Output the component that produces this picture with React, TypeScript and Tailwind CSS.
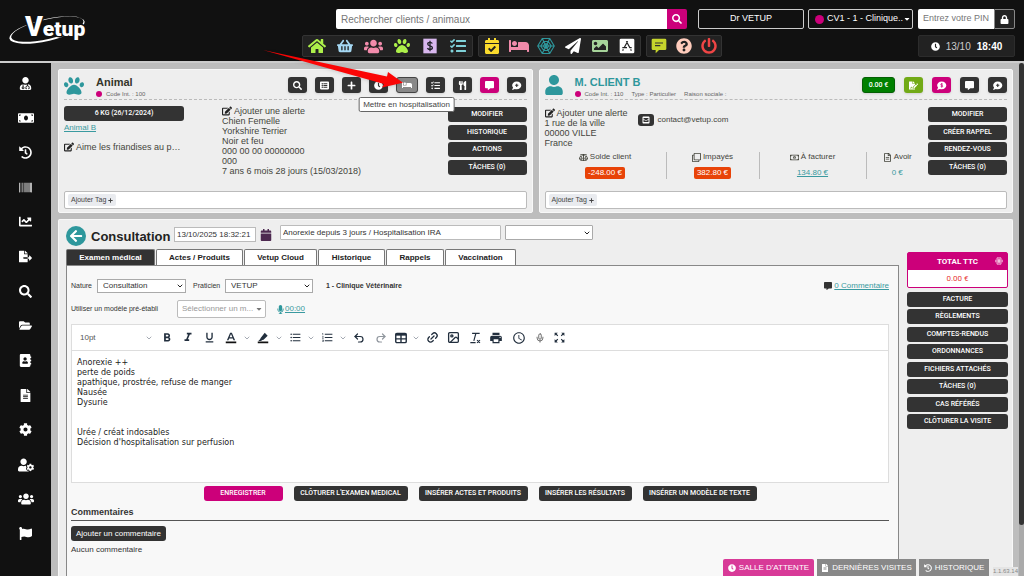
import type { ReactNode } from 'react';
import type { IconType } from 'react-icons';
import {
  FaAddressBook, FaArrowLeft, FaBalanceScale, FaBarcode, FaBed, FaCalendar, FaCalendarCheck, FaChartLine,
  FaClock, FaCog, FaCommentAlt, FaEdit, FaEnvelopeSquare, FaFileAlt, FaFileExport, FaFileSignature, FaFlag,
  FaFolderOpen, FaHistory, FaHome, FaImage, FaListAlt, FaLock, FaMicrophone, FaMoneyBill, FaPaperPlane, FaPaw,
  FaPlus, FaPowerOff, FaQuestionCircle, FaRegClone, FaRegFileAlt, FaRegMoneyBillAlt, FaSearch, FaShoppingBasket,
  FaTasks, FaUser, FaUserCog, FaUserMd, FaUsers, FaUtensils, FaCaretDown,
} from 'react-icons/fa';
import {
  MdAccessTime, MdFormatBold, MdFormatItalic, MdFormatUnderlined, MdFormatListBulleted, MdFormatListNumbered,
  MdPrint, MdZoomOutMap,
} from 'react-icons/md';
import { ChevronDown, Image as ImageIcon, Link2, Mic, Redo2, Undo2 } from 'lucide-react';

const sideIcons: [IconType, string][] = [
  [FaUserMd, 'Clients'], [FaMoneyBill, 'Caisse'], [FaHistory, 'Historique'], [FaBarcode, 'Stock'],
  [FaChartLine, 'Statistiques'], [FaFileExport, 'Exports'], [FaSearch, 'Recherche'], [FaFolderOpen, 'Dossiers'],
  [FaAddressBook, 'Contacts'], [FaFileAlt, 'Documents'], [FaCog, 'Paramètres'], [FaUserCog, 'Utilisateur'],
  [FaUsers, 'Groupes'], [FaFlag, 'Signalements'],
];

function Web({ className = '' }: { className?: string }) {
  return (
    <svg viewBox="0 0 24 24" className={className} fill="none" stroke="currentColor" strokeWidth="1.5">
      <path d="M7 2h10l6 10-6 10H7L1 12z M9 6h6l4 6-4 6H9l-4-6z M10.5 9h3l2 3-2 3h-3l-2-3z M7 2l10 20M17 2L7 22M1 12h22" />
    </svg>
  );
}

function Dollar({ className = '' }: { className?: string }) {
  return (
    <svg viewBox="0 0 24 24" className={className}>
      <rect x="2" y="1" width="20" height="22" fill="#d9b8ef" />
      <path d="M15.500 8.200c-.6-1.200-1.900-1.700-3.500-1.700-2 0-3.400.9-3.400 2.500 0 3.800 7 1.800 7 5.600 0 1.700-1.600 2.700-3.600 2.700-1.900 0-3.300-.8-3.800-2.200M12 4.300v15.400" fill="none" stroke="#22222a" strokeWidth="2" />
    </svg>
  );
}

function AppBox({ className = '' }: { className?: string }) {
  return (
    <svg viewBox="0 0 24 24" className={className}>
      <rect x="1" y="1" width="22" height="22" rx="2" fill="#fff" />
      <path d="M13 5L7.500 15M11 5l5.500 10M5 14.500h7M15.500 14.500H19M6.500 17l-1 2M17.500 17l1 2" fill="none" stroke="#222" strokeWidth="1.800" />
    </svg>
  );
}

function Bubble({ className = '', mark }: { className?: string; mark: 'plus' | 'dollar' }) {
  return (
    <svg viewBox="0 0 24 24" className={className}>
      <path d="M12.500 3C6.500 3 2.500 6.800 2.500 11.500c0 2 .8 3.900 2.100 5.300L2 21.500c3 0 5-.8 6.300-1.900 1.300.4 2.700.6 4.200.6 6 0 10-4 10-8.700S18.500 3 12.500 3z" fill="currentColor" />
      {mark === 'plus'
        ? <path d="M12.500 8v7M9 11.500h7" stroke="#333" strokeWidth="2.400" />
        : <path d="M14.800 9.300c-1.400-1.400-4.500-1-4.500.7 0 2.200 4.600 1 4.600 3.300 0 1.700-3.200 2-4.800.5M12.500 6.500v10" fill="none" stroke="#cc007a" strokeWidth="1.600" />}
    </svg>
  );
}

function Logo() {
  return (
    <svg viewBox="0 0 90 40" className="h-10 w-[90px]" role="img" aria-label="Vetup">
      <path
        fillRule="evenodd"
        transform="rotate(-13 47 21)"
        d="M8.500 21a38.500 11 0 1 0 77 0a38.500 11 0 1 0 -77 0z M10.500 20.300a37 9.800 0 1 1 74 0a37 9.800 0 1 1 -74 0z"
        fill="#fff"
      />
      <text x="25" y="27" fontSize="21" fontWeight="900" fill="#fff" stroke="#111" strokeWidth="3" paintOrder="stroke" fontFamily="Roboto,sans-serif">
        <tspan fontSize="27">V</tspan>etup
      </text>
    </svg>
  );
}

function DarkButton({ children, className = 'bg-[#333]' }: { children: ReactNode; className?: string }) {
  return (
    <button className={`h-[15px] rounded-[3px] text-center font-[Roboto,sans-serif] text-[7px] font-medium leading-[15px] whitespace-nowrap text-white ${className}`}>
      {children}
    </button>
  );
}

function IconButton({ label, children, className = 'w-[19px] bg-[#333]' }: { label: string; children: ReactNode; className?: string }) {
  return (
    <button aria-label={label} className={`flex h-4 items-center justify-center rounded-[3px] text-[9px] text-white shadow-sm ${className}`}>
      {children}
    </button>
  );
}

function TagBox() {
  return (
    <div className="flex h-[18px] items-center rounded-[2px] border border-[#bbb] bg-white px-[3px]">
      <button className="flex h-3 items-center gap-[2px] rounded-[2px] bg-[#e9ebef] px-[3px] text-[7px] text-[#444]">
        Ajouter Tag <FaPlus className="size-[5px]" />
      </button>
    </div>
  );
}

function NavGroup({ children, className }: { children: ReactNode; className: string }) {
  return (
    <nav className={`flex h-[22px] items-center justify-around rounded-[2px] border border-[#333] bg-[#222] text-base ${className}`}>
      {children}
    </nav>
  );
}

function NavButton({ label, className = '', children }: { label: string; className?: string; children: ReactNode }) {
  return <button aria-label={label} className={`flex w-5 justify-center ${className}`}>{children}</button>;
}

function SelectBox({ id, label, options, className = '' }: { id: string; label: string; options: string[]; className?: string }) {
  return (
    <span className={`relative flex items-center border border-[#aaa] bg-white ${className}`}>
      <select id={id} aria-label={label} className="h-full w-full appearance-none bg-transparent pr-3 pl-[5px] outline-none">
        {options.map((o) => <option key={o}>{o}</option>)}
      </select>
      <ChevronDown className="pointer-events-none absolute right-[1px] size-2 text-[#222]" strokeWidth={3} />
    </span>
  );
}

function AnimalPanel() {
  return (
    <section className="flex flex-col rounded-[2px] border border-[#f8f8f8] bg-[#eee] px-[5px] pt-2 pb-[3px]">
      <header className="flex h-[22px] items-start border-b border-dashed border-[#bbb]">
        <FaPaw className="mt-[-2px] size-5 text-[#2e979c]" />
        <div className="ml-3 grow">
          <h2 className="mt-[-3px] text-[11px] leading-[14px] font-bold text-[#34352a]">Animal</h2>
          <p className="flex items-center gap-1 text-[6px] leading-[10px] text-[#666]"><i className="size-[6px] rounded-full bg-[#cc007a]" />Code Int. : 100</p>
        </div>
        <div className="mt-[-1px] flex gap-2 pr-[1px]">
          <IconButton label="Rechercher"><FaSearch /></IconButton>
          <IconButton label="Fiche"><FaListAlt /></IconButton>
          <IconButton label="Ajouter"><FaPlus /></IconButton>
          <IconButton label="Horaires"><FaClock /></IconButton>
          <div className="relative">
            <IconButton label="Mettre en hospitalisation" className="w-[22px] border border-[#444] bg-[#888]"><FaBed className="size-[10px]" /></IconButton>
            <span role="tooltip" className="absolute top-5 left-1/2 z-20 -translate-x-1/2 rounded-[2px] border border-[#666] bg-white px-1 text-[8px] leading-[13px] whitespace-nowrap text-[#444]">Mettre en hospitalisation</span>
          </div>
          <IconButton label="Tâches"><FaTasks /></IconButton>
          <IconButton label="Alimentation"><FaUtensils /></IconButton>
          <IconButton label="Message" className="w-[19px] bg-[#cc007a]"><FaCommentAlt /></IconButton>
          <IconButton label="Nouveau message"><Bubble mark="plus" className="size-[11px]" /></IconButton>
        </div>
      </header>
      <div className="flex grow pt-[6px] text-[9px] leading-[10px] text-[#44453c]">
        <div className="w-[158px]">
          <DarkButton className="w-[120px] bg-[#333]">6 KG (26/12/2024)</DarkButton>
          <a href="#animal" className="mt-[2px] block text-[8px] text-[#3a9aa0] underline">Animal B</a>
          <p className="mt-[9px] flex items-center gap-[2px]"><FaEdit className="size-[10px] text-[#222]" />Aime les friandises au p…</p>
        </div>
        <div className="grow">
          <p className="flex items-center gap-[2px]"><FaEdit className="size-[10px] text-[#222]" />Ajouter une alerte</p>
          <p>Chien Femelle</p>
          <p>Yorkshire Terrier</p>
          <p>Noir et feu</p>
          <p>000 00 00 00000000</p>
          <p>000</p>
          <p>7 ans 6 mois 28 jours (15/03/2018)</p>
        </div>
        <div className="mt-[1px] flex h-[68px] w-[79px] flex-col justify-between">
          <DarkButton>MODIFIER</DarkButton>
          <DarkButton>HISTORIQUE</DarkButton>
          <DarkButton>ACTIONS</DarkButton>
          <DarkButton>TÂCHES (0)</DarkButton>
        </div>
      </div>
      <TagBox />
    </section>
  );
}

function Balance({ icon: Icon, label, children, className }: { icon: IconType; label: string; children: ReactNode; className: string }) {
  return (
    <div className={`flex h-[27px] flex-col items-center justify-between ${className}`}>
      <span className="flex items-center gap-[2px] whitespace-nowrap"><Icon className="size-[9px]" />{label}</span>
      {children}
    </div>
  );
}

function ClientPanel() {
  return (
    <section className="flex flex-col rounded-[2px] border border-[#f8f8f8] bg-[#eee] px-[5px] pt-2 pb-[3px]">
      <header className="flex h-[22px] items-start border-b border-dashed border-[#bbb]">
        <FaUser className="mt-[-3px] h-5 w-[18px] text-[#2e979c]" />
        <div className="ml-3 grow">
          <h2 className="mt-[-3px] text-[11px] leading-[14px] font-bold text-[#2e979c]">M. CLIENT B</h2>
          <p className="flex items-center gap-2 text-[6px] leading-[10px] text-[#666]">
            <span className="flex items-center gap-1"><i className="size-[6px] rounded-full bg-[#cc007a]" />Code Int. : 110</span>
            <span>Type : Particulier</span>
            <span>Raison sociale :</span>
          </p>
        </div>
        <div className="mt-[-1px] flex gap-[9px]">
          <IconButton label="Solde 0.00 €" className="w-[33px] border border-[#056005] bg-[#008000]"><span className="font-[Roboto,sans-serif] text-[7px] font-medium">0.00 €</span></IconButton>
          <IconButton label="Signature" className="w-[19px] bg-[#72aa16]"><FaFileSignature /></IconButton>
          <IconButton label="Message payant" className="w-[19px] bg-[#cc007a]"><Bubble mark="dollar" className="size-[11px]" /></IconButton>
          <IconButton label="Message"><FaCommentAlt /></IconButton>
          <IconButton label="Nouveau message"><Bubble mark="plus" className="size-[11px]" /></IconButton>
        </div>
      </header>
      <div className="flex grow pt-[6px] text-[9px] leading-[10px] text-[#44453c]">
        <div className="flex grow flex-col">
          <div className="mt-[2px] flex">
            <div className="w-[93px]">
              <p className="flex items-center gap-[2px]"><FaEdit className="size-[10px] text-[#222]" />Ajouter une alerte</p>
              <p>1 rue de la ville</p>
              <p>00000 VILLE</p>
              <p>France</p>
            </div>
            <div className="mt-[6px] flex h-3 items-center gap-1 text-[8px]">
              <button aria-label="Envoyer un e-mail" className="flex h-3 w-4 items-center justify-center rounded-[3px] bg-[#333] text-white"><FaEnvelopeSquare className="size-2" /></button>
              contact@vetup.com
            </div>
          </div>
          <div className="flex pt-[4px] text-[8px] leading-[10px]">
            <Balance icon={FaBalanceScale} label="Solde client" className="w-[122px] border-r border-[#bbb]">
              <span className="rounded-[2px] bg-[#e84308] px-[3px] leading-[12px] text-white">-248.00 €</span>
            </Balance>
            <Balance icon={FaRegClone} label="Impayés" className="w-[93px] border-r border-[#bbb]">
              <span className="rounded-[2px] bg-[#e84308] px-[3px] leading-[12px] text-white">382.80 €</span>
            </Balance>
            <Balance icon={FaRegMoneyBillAlt} label="À facturer" className="w-[107px] border-r border-[#bbb]">
              <a href="#facturer" className="leading-[12px] text-[#3a9aa0] underline">134.80 €</a>
            </Balance>
            <Balance icon={FaRegFileAlt} label="Avoir" className="grow">
              <span className="leading-[12px] text-[#3a9aa0]">0 €</span>
            </Balance>
          </div>
        </div>
        <div className="mt-[1px] flex h-[68px] w-[79px] flex-col justify-between">
          <DarkButton>MODIFIER</DarkButton>
          <DarkButton>CRÉER RAPPEL</DarkButton>
          <DarkButton>RENDEZ-VOUS</DarkButton>
          <DarkButton>TÂCHES (0)</DarkButton>
        </div>
      </div>
      <TagBox />
    </section>
  );
}

function Tool({ label, menu, className = '', children }: { label: string; menu?: boolean; className?: string; children: ReactNode }) {
  return (
    <button aria-label={label} className={`flex shrink-0 items-center justify-between ${className}`}>
      <span className="flex w-[14px] justify-center">{children}</span>
      {menu && <ChevronDown className="size-2 text-[#777f8c]" />}
    </button>
  );
}

function Editor() {
  return (
    <div className="mt-[6px] border border-[#ddd] bg-white text-[#222f3e]">
      <div className="flex h-[26px] items-center border-b border-[#ddd] text-[13px]">
        <button className="ml-2 flex w-[73px] items-center justify-between text-[8px] text-[#555]"><span>10pt</span><ChevronDown className="size-2 text-[#777f8c]" /></button>
        <Tool label="Gras" className="ml-[7px]"><MdFormatBold className="size-4" /></Tool>
        <Tool label="Italique" className="ml-[7px]"><MdFormatItalic className="size-[15px]" /></Tool>
        <Tool label="Souligné" className="ml-[7px]"><MdFormatUnderlined /></Tool>
        <Tool label="Couleur du texte" menu className="ml-2 w-[27px]">
          <svg viewBox="0 0 24 24" className="size-[14px]"><path d="M3 18h18v3H3z" fill="#111" /><path d="M10.500 3h3L19 16h-2.700l-1.100-3H8.800l-1.100 3H5zM9.600 10.800h4.800L12 5z" fill="currentColor" /></svg>
        </Tool>
        <Tool label="Surlignage" menu className="ml-[5px] w-[27px]">
          <svg viewBox="0 0 24 24" className="size-[14px]"><path d="M3 18h18v3H3z" fill="#111" /><path d="M8 12l7-9 5 5-7 7-2 .5-2.500 1.500H4l3-3z" fill="currentColor" /></svg>
        </Tool>
        <Tool label="Liste à puces" menu className="ml-[5px] w-[27px]"><MdFormatListBulleted /></Tool>
        <Tool label="Liste numérotée" menu className="ml-[5px] w-[27px]"><MdFormatListNumbered /></Tool>
        <Tool label="Annuler" className="ml-[5px]"><Undo2 className="size-3" strokeWidth={2.4} /></Tool>
        <Tool label="Rétablir" className="ml-2 opacity-50"><Redo2 className="size-3" strokeWidth={2.4} /></Tool>
        <Tool label="Tableau" menu className="ml-[6px] w-[26px]">
          <svg viewBox="0 0 24 24" className="size-[14px]" fill="none" stroke="currentColor" strokeWidth="2.400"><rect x="3" y="4" width="18" height="16" rx="2" /><path d="M3 6h18" strokeWidth="4" /><path d="M3 13.500h18M12 6v14" /></svg>
        </Tool>
        <Tool label="Lien" className="ml-[5px]"><Link2 className="size-[13px] -rotate-45" strokeWidth={2.4} /></Tool>
        <Tool label="Image" className="ml-[7px]"><ImageIcon className="size-[13px]" strokeWidth={2.4} /></Tool>
        <Tool label="Effacer la mise en forme" className="ml-2">
          <svg viewBox="0 0 24 24" className="size-[14px]" fill="none" stroke="currentColor" strokeWidth="2"><path d="M7 4h13M13.500 4L10 17M4 20h9M15.500 15.500l5 5M20.500 15.500l-5 5" /></svg>
        </Tool>
        <Tool label="Imprimer" className="ml-[7px]"><MdPrint className="size-[14px]" /></Tool>
        <Tool label="Horodatage" className="ml-[9px]"><MdAccessTime className="size-[14px]" /></Tool>
        <Tool label="Dictée" className="ml-[7px]"><Mic className="size-[10px] text-[#555]" /></Tool>
        <Tool label="Plein écran" className="ml-[5px]"><MdZoomOutMap className="size-[13px]" /></Tool>
      </div>
      <textarea
        aria-label="Compte rendu de l’examen"
        className="block h-[131px] w-full resize-none px-[5px] pt-[7px] font-['DejaVu_Sans',sans-serif] text-[8px] leading-[10px] text-[#222] outline-none"
        defaultValue={"Anorexie ++\nperte de poids\napathique, prostrée, refuse de manger\nNausée\nDysurie\n\n\nUrée / créat indosables\nDécision d'hospitalisation sur perfusion"}
      />
    </div>
  );
}

const tabs: [string, string][] = [
  ['Examen médical', 'w-[89px]'], ['Actes / Produits', 'w-[87px]'], ['Vetup Cloud', 'w-[73px]'],
  ['Historique', 'w-[67px]'], ['Rappels', 'w-[58px]'], ['Vaccination', 'w-[71px]'],
];

function ConsultationPanel() {
  return (
    <section className="mt-[6px] flex grow gap-2 rounded-t-[2px] border border-b-0 border-[#f8f8f8] bg-[#eee] pt-[5px] pr-1 pl-[7px] text-[8px] text-[#333]">
      <div className="flex min-w-0 grow flex-col">
        <div className="flex items-start">
          <button aria-label="Retour" className="mt-[1px] flex size-5 items-center justify-center rounded-full bg-[#2e979c] text-white"><FaArrowLeft className="size-[14px]" /></button>
          <h1 className="mt-1 ml-[5px] w-[83px] text-[13px] leading-[16px] font-bold text-[#222]">Consultation</h1>
          <input aria-label="Date" defaultValue="13/10/2025 18:32:21" className="mt-[2px] h-[15px] w-[82px] border border-[#bbb] bg-white px-[2px] text-[8px]" />
          <FaCalendar className="mt-1 ml-1 size-3 text-[#4d2850]" />
          <input aria-label="Motif" defaultValue="Anorexie depuis 3 jours / Hospitalisation IRA" className="ml-2 h-[15px] w-[221px] rounded-[1px] border border-[#bbb] bg-white px-[2px] text-[8px]" />
          <SelectBox id="statut" label="Statut" options={['']} className="ml-1 h-[15px] w-[88px] rounded-[1px]" />
        </div>
        <div role="tablist" className="mt-[3px] flex gap-[1px]">
          {tabs.map(([name, width], i) => (
            <button key={name} role="tab" aria-selected={i === 0} className={`h-4 rounded-t-[2px] border border-b-0 border-[#777] text-[8px] font-bold ${width} ${i === 0 ? 'bg-[#333] text-white' : 'bg-white text-[#222]'}`}>{name}</button>
          ))}
        </div>
        <div className="grow border border-b-0 border-[#888] bg-[#f8f8f8] pt-[13px] pr-[9px] pl-1">
          <div className="flex h-[14px] items-center">
            <label htmlFor="nature" className="w-[26px] text-[7px]">Nature</label>
            <SelectBox id="nature" label="Nature" options={['Consultation']} className="h-[14px] w-[89px] text-[8px]" />
            <label htmlFor="praticien" className="ml-[7px] w-[32px] text-[7px]">Praticien</label>
            <SelectBox id="praticien" label="Praticien" options={['VETUP']} className="h-[14px] w-[88px] text-[8px]" />
            <b className="ml-[13px] grow text-[7px]">1 - Clinique Vétérinaire</b>
            <FaCommentAlt className="size-2" />
            <a href="#commentaires" className="ml-[2px] text-[#3a9aa0] underline">0 Commentaire</a>
          </div>
          <div className="mt-[7px] flex h-[18px] items-center">
            <label htmlFor="modele" className="w-[106px] text-[7px]">Utiliser un modèle pré-établi</label>
            <span className="relative flex h-[18px] w-[89px] items-center rounded-[2px] border border-[#bbb] bg-white">
              <select id="modele" className="h-full w-full appearance-none bg-transparent px-1 text-[8px] text-[#999] outline-none"><option>Sélectionner un m...</option></select>
              <FaCaretDown className="pointer-events-none absolute right-[2px] size-2 text-[#777]" />
            </span>
            <FaMicrophone className="ml-[10px] size-[9px] text-[#2e979c]" />
            <a href="#dictee" className="text-[#3a9aa0] underline">00:00</a>
          </div>
          <Editor />
          <div className="mt-[3px] flex justify-center gap-[11px]">
            <DarkButton className="w-[79px] bg-[#cc007a]">ENREGISTRER</DarkButton>
            <DarkButton className="w-[114px] bg-[#333]">CLÔTURER L'EXAMEN MEDICAL</DarkButton>
            <DarkButton className="w-[109px] bg-[#333]">INSÉRER ACTES ET PRODUITS</DarkButton>
            <DarkButton className="w-[93px] bg-[#333]">INSÉRER LES RÉSULTATS</DarkButton>
            <DarkButton className="w-[114px] bg-[#333]">INSÉRER UN MODÈLE DE TEXTE</DarkButton>
          </div>
          <h3 className="mt-[5px] border-b border-[#555] pb-[2px] text-[9px] leading-[12px] font-bold">Commentaires</h3>
          <button className="mt-[5px] block h-[15px] rounded-[3px] bg-[#333] px-[5px] text-[8px] leading-[15px] text-white">Ajouter un commentaire</button>
          <p className="mt-1 text-[8px] leading-[10px]">Aucun commentaire</p>
        </div>
      </div>
      <aside className="mt-[27px] flex w-[101px] shrink-0 flex-col">
        <div className="rounded-[2px] border border-[#cc007a] bg-white text-center font-[Roboto,sans-serif]">
          <div className="relative bg-[#cc007a] text-[8px] leading-[17px] font-bold text-white">TOTAL TTC<Web className="absolute top-1 right-1 size-2" /></div>
          <div className="text-[8px] leading-[17px] text-[#e8403a]">0.00 €</div>
        </div>
        <div className="mt-1 flex h-[137px] flex-col justify-between">
          {['FACTURE', 'RÈGLEMENTS', 'COMPTES-RENDUS', 'ORDONNANCES', 'FICHIERS ATTACHÉS', 'TÂCHES (0)', 'CAS RÉFÉRÉS', 'CLÔTURER LA VISITE'].map((t) => (
            <DarkButton key={t}>{t}</DarkButton>
          ))}
        </div>
      </aside>
    </section>
  );
}

export default function App() {
  return (
    <div className="relative flex h-screen flex-col overflow-hidden bg-[#bdbdbd] font-['Liberation_Sans',Arial,sans-serif]">
      <header className="flex h-[63px] shrink-0 border-b-2 border-[#ccc] bg-[#111] pt-[9px] pr-[9px]">
        <div className="w-[302px] shrink-0"><Logo /></div>
        <div className="flex grow flex-col gap-[6px] text-[10px] text-white">
          <div className="flex h-5 pl-[34px]">
            <input aria-label="Rechercher" placeholder="Rechercher clients / animaux" className="min-w-0 grow rounded-l-[2px] bg-white px-[5px] text-[10px] placeholder:text-[#777]" />
            <button aria-label="Rechercher" className="flex w-5 items-center justify-center rounded-r-[2px] bg-[#cc007a]"><FaSearch /></button>
            <button className="ml-[11px] w-[106px] rounded-[2px] border border-[#ccc] text-[9px]">Dr VETUP</button>
            <button className="ml-1 flex w-[105px] items-center rounded-[2px] border border-[#ccc] pl-[6px] text-[9px] whitespace-nowrap"><i className="mr-[3px] size-[9px] rounded-full bg-[#cc007a]" />CV1 - 1 - Clinique..<FaCaretDown className="size-2" /></button>
            <input aria-label="Code PIN" placeholder="Entrez votre PIN" className="ml-[5px] w-[76px] rounded-l-[2px] bg-white px-[5px] text-[9px] placeholder:text-[#777]" />
            <button aria-label="Verrouiller" className="flex w-[21px] items-center justify-center rounded-r-[2px] border border-[#888] bg-[#222]"><FaLock className="size-[9px]" /></button>
          </div>
          <div className="flex gap-[5px]">
            <NavGroup className="w-[171px]">
              <NavButton label="Accueil" className="text-[#adf04a]"><FaHome className="size-[18px]" /></NavButton>
              <NavButton label="Ventes" className="text-[#a5d8f3]"><FaShoppingBasket /></NavButton>
              <NavButton label="Clients" className="text-[#f28bab]"><FaUsers className="size-[19px]" /></NavButton>
              <NavButton label="Animaux" className="text-[#adf04a]"><FaPaw /></NavButton>
              <NavButton label="Caisse"><Dollar className="size-4" /></NavButton>
              <NavButton label="Tâches" className="text-[#7fd1d8]"><FaTasks /></NavButton>
            </NavGroup>
            <NavGroup className="w-[163px]">
              <NavButton label="Agenda" className="text-[#fadb2d]"><FaCalendarCheck /></NavButton>
              <NavButton label="Hospitalisation" className="text-[#f28bab]"><FaBed className="size-5" /></NavButton>
              <NavButton label="Réseau" className="text-[#2e979c]"><Web className="size-[18px]" /></NavButton>
              <NavButton label="Envois"><FaPaperPlane /></NavButton>
              <NavButton label="Images" className="text-[#a6d49a]"><FaImage /></NavButton>
              <NavButton label="Applications"><AppBox className="size-4" /></NavButton>
            </NavGroup>
            <NavGroup className="w-[76px]">
              <NavButton label="Messages" className="text-[#c6d52c]">
                <svg viewBox="0 0 24 24" className="size-4"><path d="M3 1h18a2 2 0 0 1 2 2v13a2 2 0 0 1-2 2h-9l-5 5v-5H3a2 2 0 0 1-2-2V3a2 2 0 0 1 2-2z" fill="currentColor" /><path d="M6 7.500h12M6 11.500h8" stroke="#333" strokeWidth="1.800" /></svg>
              </NavButton>
              <NavButton label="Aide" className="text-[#ffccbc]"><FaQuestionCircle /></NavButton>
              <NavButton label="Déconnexion" className="text-[#ef4545]"><FaPowerOff /></NavButton>
            </NavGroup>
            <div className="ml-auto flex h-[22px] w-[97px] items-center justify-center gap-[6px] rounded-[2px] border border-[#2c2c2c] bg-[#222] text-[10px]">
              <FaClock className="size-[9px]" /><span className="text-[#ccc]">13/10</span><b>18:40</b>
            </div>
          </div>
        </div>
      </header>
      <div className="flex min-h-0 grow">
        <nav className="flex w-[51px] shrink-0 flex-col items-center justify-between bg-[#111] pt-[11px] pb-[33px] text-[13px] text-white">
          {sideIcons.map(([Icon, label]) => (
            <button key={label} aria-label={label} className="flex h-[18px] items-center">
              <Icon className={Icon === FaUserCog || Icon === FaUsers || Icon === FaMoneyBill ? 'size-4' : ''} />
            </button>
          ))}
        </nav>
        <main className="flex min-w-0 grow flex-col overflow-hidden pt-[6px] pr-[6px] pl-[7px]">
          <div className="grid h-[144px] shrink-0 grid-cols-2 gap-[6px]">
            <AnimalPanel />
            <ClientPanel />
          </div>
          <ConsultationPanel />
        </main>
        <div className="w-[5px] shrink-0 bg-[#aaa]"><div className="h-[90%] rounded-full bg-[#333]" /></div>
      </div>
      <footer className="absolute right-[6px] bottom-0 z-10 flex items-end gap-[3px] text-[8px] whitespace-nowrap text-white">
        <button className="flex h-[17px] w-[91px] items-center justify-center gap-[3px] rounded-t-[2px] bg-[#d83a98]"><FaClock className="size-2" />SALLE D'ATTENTE</button>
        <button className="flex h-[17px] w-[99px] items-center justify-center gap-[3px] bg-[#888]"><FaFileAlt className="size-2" />DERNIÈRES VISITES</button>
        <button className="flex h-[17px] w-[70px] items-center justify-center gap-[3px] bg-[#888]"><FaHistory className="size-2" />HISTORIQUE</button>
        <span className="ml-[1px] bg-[#e4e4e4] text-[6px] leading-[9px] text-[#888]">1.1.63.14</span>
      </footer>
      <svg viewBox="0 0 150 50" className="pointer-events-none absolute top-[45px] left-[260px] z-30 h-[50px] w-[150px] drop-shadow">
        <path d="M3 5L127 31.500L128 27L143 37.700L122 42.500L124 39Z" fill="#fb0505" />
      </svg>
    </div>
  );
}
